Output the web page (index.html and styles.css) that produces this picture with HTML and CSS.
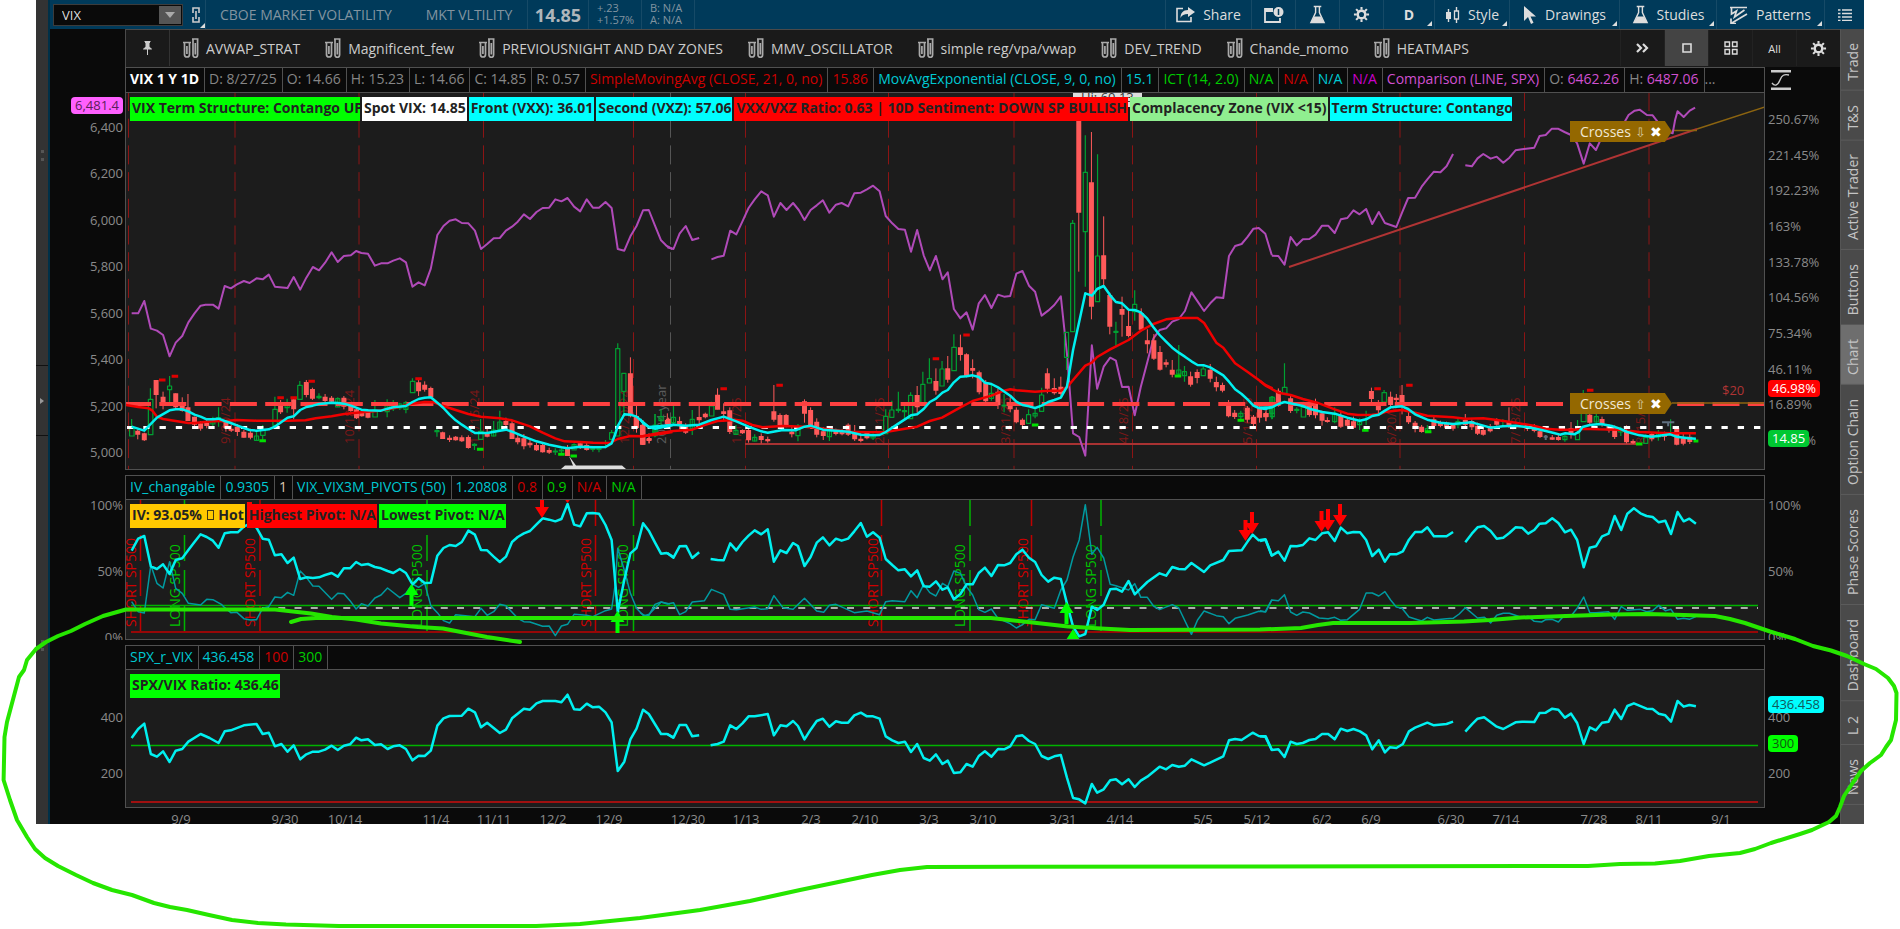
FILE: index.html
```html
<!DOCTYPE html>
<html lang="en">

<head>
    <meta charset="UTF-8">
    <title>VIX - Charts</title>
    <link rel="stylesheet" href="styles.css">
</head>

<body>
    <!-- Shared icons -->
    <svg class="defs" aria-hidden="true">
        <symbol id="i-tubes" viewBox="0 0 17 20">
            <path d="M1 4.500h8M10 1h6.500M2.500 5v11.500a2.500 2.500 0 0 0 5 0V5M11 1.500v15.500a2.300 2.300 0 0 0 4.600 0V1.500M4.900 8v8M13.300 5v11.500" fill="none" stroke="currentColor" stroke-width="1.700" />
        </symbol>
        <symbol id="i-flask" viewBox="0 0 18 20">
            <path d="M5 1.500h8M7 2v6L2 18.500h14L11 8V2" fill="none" stroke="currentColor" stroke-width="1.500" />
            <path d="M5.500 12h7l3.500 6.500H2z" fill="currentColor" />
        </symbol>
        <symbol id="i-gear" viewBox="0 0 18 18">
            <circle cx="9" cy="9" r="4" fill="none" stroke="currentColor" stroke-width="2.600" />
            <path d="M9 1v3M9 14v3M1 9h3M14 9h3M3.300 3.300l2.200 2.200M12.500 12.500l2.200 2.200M14.700 3.300l-2.200 2.200M5.500 12.500l-2.200 2.200" stroke="currentColor" stroke-width="2.200" />
        </symbol>
    </svg>

    <div class="app">
        <div class="rail">
            <span class="rail-grip"></span>
            <button class="rail-toggle" aria-label="Expand panel"></button>
            <span class="rail-grip"></span>
        </div>

        <div class="main">
            <div class="topbar">
                <div class="symbol-cell">
                    <div class="symbol-box">
                        <input type="text" value="VIX" aria-label="Symbol">
                        <button aria-label="Symbol list"></button>
                    </div>
                    <button class="link-btn more" aria-label="Link">
                        <svg width="10" height="18" viewBox="0 0 10 18" fill="none" stroke="currentColor" stroke-width="1.600"><path d="M2 7V2h6v5M2 11v5h6v-5M5 5v8" /></svg>
                    </button>
                </div>
                <div class="quote-name">
                    <span>CBOE MARKET VOLATILITY</span>
                    <span>MKT VLTILITY</span>
                </div>
                <div class="quote-last">14.85</div>
                <div class="quote-small">+.23<br>+1.57%</div>
                <div class="quote-small">B: N/A<br>A: N/A</div>
                <div class="spacer"></div>
                <button class="tool w-share">
                    <svg width="19" height="17" viewBox="0 0 19 17"><path d="M7 2.500H1v13h14V11" fill="none" stroke="currentColor" stroke-width="1.600" /><path d="M12 1l7 5-7 5V8C8 8 6 9 4.500 12 4.500 7 7 4 12 4z" fill="currentColor" /></svg>
                    Share
                </button>
                <button class="tool w-icon" aria-label="Calendar">
                    <svg width="20" height="16" viewBox="0 0 20 16"><path d="M9 2H1v13h15v-4M1 4h8" fill="none" stroke="currentColor" stroke-width="1.800" /><circle cx="14.500" cy="5" r="5" fill="currentColor" /><path d="M14.500 2v6" stroke="#003a5a" stroke-width="1.500" /></svg>
                </button>
                <button class="tool w-icon" aria-label="Lab"><svg width="17" height="19"><use href="#i-flask" /></svg></button>
                <button class="tool w-icon" aria-label="Settings"><svg width="17" height="17"><use href="#i-gear" /></svg></button>
                <button class="tool w-day more"><b>D</b></button>
                <button class="tool w-style more">
                    <svg width="15" height="16" viewBox="0 0 15 16"><path d="M3.500 2v13M11.500 0v4M11.500 12v4" stroke="currentColor" stroke-width="1.400" /><path d="M1 5h5v7H1z" fill="currentColor" /><path d="M9.500 4h4v8h-4z" fill="none" stroke="currentColor" stroke-width="1.300" /></svg>
                    Style
                </button>
                <button class="tool w-drawings more">
                    <svg width="14" height="18" viewBox="0 0 14 18"><path d="M1 0v15l4-4 3 7 2.500-1.200L7.500 10.500H13z" fill="currentColor" /></svg>
                    Drawings
                </button>
                <button class="tool w-studies more"><svg width="17" height="19"><use href="#i-flask" /></svg>Studies</button>
                <button class="tool w-patterns more">
                    <svg width="18" height="18" viewBox="0 0 18 18"><path d="M0 1.500h17M1.500 2v6l5-3-2 6 10-7M1 17.500L17 8M1 12.500v5h5" fill="none" stroke="currentColor" stroke-width="1.700" /></svg>
                    Patterns
                </button>
                <button class="tool w-list" aria-label="Menu">
                    <svg width="14" height="12" viewBox="0 0 14 12"><path d="M0 1h2.500M4 1h10M0 4.500h2.500M4 4.500h10M0 8h2.500M4 8h10M0 11.400h2.500M4 11.400h10" stroke="currentColor" stroke-width="1.500" /></svg>
                </button>
            </div>

            <div class="body">
                <div class="workspace">
                    <div class="sets">
                        <button class="pin" aria-label="Pin">
                            <svg width="9" height="14" viewBox="0 0 9 14"><path d="M2 0h5v1l-1 1v4l2.500 2H.5L3 6V2L2 1zM4.500 8v6" fill="currentColor" stroke="currentColor" /></svg>
                        </button>
                        <div class="set-list">
                            <button><svg width="17" height="20"><use href="#i-tubes" /></svg>AVWAP_STRAT</button>
                            <button><svg width="17" height="20"><use href="#i-tubes" /></svg>Magnificent_few</button>
                            <button><svg width="17" height="20"><use href="#i-tubes" /></svg>PREVIOUSNIGHT AND DAY ZONES</button>
                            <button><svg width="17" height="20"><use href="#i-tubes" /></svg>MMV_OSCILLATOR</button>
                            <button><svg width="17" height="20"><use href="#i-tubes" /></svg>simple reg/vpa/vwap</button>
                            <button><svg width="17" height="20"><use href="#i-tubes" /></svg>DEV_TREND</button>
                            <button><svg width="17" height="20"><use href="#i-tubes" /></svg>Chande_momo</button>
                            <button><svg width="17" height="20"><use href="#i-tubes" /></svg>HEATMAPS</button>
                        </div>
                        <button class="cell" aria-label="More sets">
                            <svg width="13" height="10" viewBox="0 0 13 10"><path d="M1 1l4 4-4 4M7 1l4 4-4 4" fill="none" stroke="currentColor" stroke-width="2.200" /></svg>
                        </button>
                        <button class="cell cell-on" aria-label="Single chart">
                            <svg width="10" height="10" viewBox="0 0 10 10"><path d="M1 1h8v8H1z" fill="none" stroke="currentColor" stroke-width="1.600" /></svg>
                        </button>
                        <button class="cell" aria-label="Grid">
                            <svg width="14" height="14" viewBox="0 0 14 14"><path d="M1 1h4.500v4.500H1zM8.500 1H13v4.500H8.500zM1 8.500h4.500V13H1zM8.500 8.500H13V13H8.500z" fill="none" stroke="currentColor" stroke-width="1.400" /></svg>
                        </button>
                        <button class="cell cell-all">All</button>
                        <button class="cell" aria-label="Chart settings"><svg width="17" height="17"><use href="#i-gear" /></svg></button>
                    </div>

                    <!-- Price -->
                    <div class="row row-price">
                        <div class="axis axis-left">
                            <span class="tag tag-pink">6,481.4</span>
                            <span>6,400</span><span>6,200</span><span>6,000</span><span>5,800</span><span>5,600</span><span>5,400</span><span>5,200</span><span>5,000</span>
                        </div>
                        <div class="pane">
                            <div class="status">
                                <b>VIX 1 Y 1D</b>
                                <span>D: 8/27/25</span>
                                <span>O: 14.66</span>
                                <span>H: 15.23</span>
                                <span>L: 14.66</span>
                                <span>C: 14.85</span>
                                <span>R: 0.57</span>
                                <span class="red">SimpleMovingAvg (CLOSE, 21, 0, no)</span>
                                <span class="red">15.86</span>
                                <span class="cyan">MovAvgExponential (CLOSE, 9, 0, no)</span>
                                <span class="cyan">15.1</span>
                                <span class="green">ICT (14, 2.0)</span>
                                <span class="green">N/A</span>
                                <span class="red">N/A</span>
                                <span class="cyan">N/A</span>
                                <span class="magenta">N/A</span>
                                <span class="orchid">Comparison (LINE, SPX)</span>
                                <span>O: <i>6462.26</i></span>
                                <span>H: <i>6487.06</i></span>
                                <span class="rest">...</span>
                            </div>
                            <div class="plot plot-price">
                                <svg viewBox="126 93 1638 376" preserveAspectRatio="none">
                                    <path class="expiry" d="M128.500 92V469M235 92V469M359 92V469M483.500 92V469M633.500 92V469M745.500 92V469M888.500 92V469M1014 92V469M1132.500 92V469M1256.500 92V469M1400 92V469M1524.500 92V469M1649 92V469" />
                                    <path class="expiry year" d="M670.500 92V469" />
                                    <g class="expiry-text">
                                        <text transform="translate(230 444) rotate(-90)">9/20/24</text>
                                        <text transform="translate(354 444) rotate(-90)">10/18/24</text>
                                        <text transform="translate(479 444) rotate(-90)">11/15/24</text>
                                        <text transform="translate(629 444) rotate(-90)">12/20/24</text>
                                        <text class="year-text" transform="translate(666 444) rotate(-90)">2024 year</text>
                                        <text transform="translate(741 444) rotate(-90)">1/17/25</text>
                                        <text transform="translate(884 444) rotate(-90)">2/21/25</text>
                                        <text transform="translate(1010 444) rotate(-90)">3/21/25</text>
                                        <text transform="translate(1128 444) rotate(-90)">4/18/25</text>
                                        <text transform="translate(1252 444) rotate(-90)">5/16/25</text>
                                        <text transform="translate(1396 444) rotate(-90)">6/20/25</text>
                                        <text transform="translate(1520 444) rotate(-90)">7/18/25</text>
                                        <text transform="translate(1645 444) rotate(-90)">8/15/25</text>
                                    </g>
                                    <path class="support" d="M745 444H1640" />
                                    <path class="trend" d="M1289 267L1697 129" />
                                    <path class="alert-line" d="M1697 129L1765 107M1672 130.500H1697" />

                                    <!-- SPX comparison -->
                                    <g class="seg spx" transform="translate(30 120) scale(.408163 .333333)">
                                        <path d="M249 580 265 580 280 543 296 626 311 632 326 645 342 709 357 668 373 648 388 607 403 580 418 557 430 554 448 554 462 566 477 498 492 505 507 493 524 483 538 489 555 475 570 478 585 464 600 500 631 504 646 471 662 509 677 473 693 441 708 451 723 428 739 397 754 426 769 408 786 406 799 393 812 399 828 401 845 437 860 430 876 430 890 422 906 415 921 427 937 500 952 487 967 496 982 446 998 345 1013 318 1028 302 1043 298 1058 309 1074 310 1090 332 1105 387 1120 372 1136 355 1151 354 1166 332 1181 320 1195 305 1210 283 1225 297 1241 276 1256 264 1272 263 1287 238 1302 244 1317 234 1333 260 1348 274 1364 238 1379 263 1394 263 1410 246 1425 264 1440 387 1456 392 1471 349 1486 318 1502 271 1516 270 1531 316 1546 361 1560 378 1574 387" />
                                    </g>
                                    <g class="seg spx" transform="translate(640 120) scale(.408163 .333333)">
                                        <path d="M67 382 82 387 97 341 112 318 128 360 145 354M175 418 190 411 205 407 221 332 236 343 251 304 266 264 281 238 297 214 313 226 328 290 344 249 359 270 375 249 389 270 403 300 418 270 433 256 448 241 464 278 480 254 494 249 510 259 525 220 541 218 556 208 571 197 587 214 602 288 618 310 633 327 649 329 664 395 679 330 695 406 710 451 725 408 741 478 754 457 769 567 785 595 800 577 815 629 830 550 845 525 861 564 877 524 892 530 907 528 922 461 937 453 953 497 968 515 984 587 1000 572 1015 555 1031 529 1046 700 1061 940 1076 951 1091 1007 1107 676 1120 806 1136 740 1152 713 1166 722 1181 801 1197 800 1212 886 1227 800 1243 726 1258 655 1273 630 1289 625 1304 605 1320 597 1335 573 1351 517 1366 544 1382 573 1397 550 1412 532 1429 534 1443 408 1458 378 1474 372 1489 350 1503 326 1516 324 1532 341 1548 406" />
                                    </g>
                                    <g class="seg spx" transform="translate(1260 120) scale(.408163 .333333)">
                                        <path d="M29 407 45 408 60 434 75 351 90 376 105 358 121 357 136 344 152 317 167 317 183 339 198 298 214 294 229 271 244 283 260 267 275 312 291 276 306 309 334 321 348 278 363 234 380 233 396 200 410 178 426 155 442 157 457 139 473 102M503 136 519 139 533 115 547 102 565 116 580 110 596 128 611 113 626 91 642 88 672 83 685 48 700 45 715 26 730 26 746 36 762 45 777 70 793 131 808 70 823 90 838 50 866 44 882 30 895 2 903 -15 918 -28 930 -31 948 -15 962 -14 972 2 990 30 1011 40 1017 0 1023 -26 1038 -9 1053 -28 1066 -37" />
                                    </g>

                                    <!-- Candles -->
                                    <g class="seg" transform="translate(30 120) scale(.408163 .333333)">
                                        <path class="wick-dn" d="M264 928V958M280 938V963M309 780V865M326 815V868M357 820V870M373 832V875M387 822V903M403 890V925M418 903V932M433 900V925M480 903V935M493 913V936M508 912V948M524 930V953M540 926V958M614 840V882M646 832V898M677 780V832M692 803V840M723 822V848M739 828V850M769 828V868M786 850V875M800 862V897M813 868V890M828 868V895M952 780V828M967 784V815M982 800V835M1011 935V957M1028 946V966M1043 948V962M1058 946V966M1074 946V986M1120 925V952M1166 893V920M1181 902V957M1195 943V973M1210 942V988M1225 955V983M1241 968V993M1256 966V998M1272 983V1002M1317 975V1008M1348 966V987M1364 968V992M1471 712V892M1486 855V938M1502 900V975M1517 945V970M1564 893V920" />
                                        <path class="body-dn" d="M264 932V944M280 940V961M309 780V825M326 830V858M357 820V862M373 855V873M387 862V903M403 890V914M418 910V926M433 908V918M480 906V925M493 926V932M508 920V936M524 935V953M540 938V953M614 850V877M646 838V868M677 786V825M692 807V836M723 830V843M739 833V845M769 833V860M786 858V873M800 868V895M813 877V889M828 876V893M952 787V814M967 794V809M982 804V832M1011 937V957M1028 953V960M1043 950V961M1058 952V964M1074 951V984M1120 938V950M1166 903V915M1181 910V957M1195 953V967M1210 955V979M1225 968V976M1241 975V991M1256 975V997M1272 990V998M1317 985V1008M1348 970V984M1364 975V990M1471 760V889M1486 888V924M1502 914V974M1517 954V961M1564 896V916" />
                                        <path class="candle-up" d="M249 897V925M244 925h11v23h-11zM295 805V838M290 838h11v106h-11zM342 768V798M337 798h10v11h-10zM342 809V855M448 890V920M443 905h10v7h-10zM462 862V920M457 893h10v10h-10zM555 935V962M550 948h10v13h-10zM570 915V928M565 928h11v18h-11zM570 946V962M600 830V868M595 868h11v48h-11zM630 836V878M625 848h10v15h-10zM661 783V796M656 796h11v42h-11zM708 820V838M703 829h10v4h-10zM754 832V862M749 836h10v25h-10zM845 840V870M840 870h11v21h-11zM875 838V892M870 850h10v25h-10zM890 840V873M885 850h10v16h-10zM906 848V870M901 852h10v12h-10zM921 843V880M916 848h10v20h-10zM937 775V784M932 784h11v34h-11zM997 928V950M992 932h10v3h-10zM1089 970V990M1084 973h10v3h-10zM1104 897V934M1099 934h11v24h-11zM1136 903V950M1131 930h10v18h-10zM1151 872V930M1146 906h10v22h-10zM1287 985V1005M1282 993h10v3h-10zM1302 985V1000M1297 990h10v3h-10zM1333 970V990M1328 974h10v16h-10zM1379 978V995M1374 984h10v4h-10zM1394 980V997M1389 984h10v4h-10zM1410 960V985M1425 930V938M1420 938h11v20h-11zM1440 670V686M1435 686h10v262h-10zM1455 814V882M1450 760h10v54h-10zM1531 882V952M1526 925h10v12h-10zM1546 868V925M1541 890h10v12h-10z" />
                                        <path class="tick-red" d="M316 780h16M347 769h16M606 833h16M638 833h16M682 784h16M944 776h16" />
                                        <path class="tick-green" d="M562 962h16M1095 988h16M1294 1003h16M1324 1008h16" />
                                    </g>
                                    <g class="seg" transform="translate(640 120) scale(.408163 .333333)">
                                        <path class="wick-dn" d="M6 910V975M22 940V970M67 880V925M97 890V928M112 910V942M145 855V912M160 878V895M190 805V868M205 850V905M220 862V942M251 928V942M266 922V968M297 940V970M313 950V968M328 795V905M343 880V922M358 882V922M372 915V952M403 838V908M418 862V922M433 895V952M449 922V960M480 926V946M495 928V946M510 910V948M526 915V963M541 940V967M556 935V958M679 798V878M725 745V824M754 708V788M785 644V722M800 700V772M815 718V775M831 752V823M847 780V852M877 805V867M907 825V877M922 862V910M937 895V918M998 745V820M1015 775V824M1031 770V827M1075 0V455M1106 36V598M1136 289V502M1151 518V643M1181 530V650M1197 570V652M1228 565V634M1243 628V700M1259 642V720M1274 678V752M1289 718V742M1304 720V772M1349 755V800M1365 748V790M1397 732V787M1412 770V814M1427 788V817M1442 840V892M1457 870V897M1488 858V908M1503 885V918M1518 850V908M1534 868V904M1564 808V855" />
                                        <path class="body-dn" d="M6 915V974M22 957V963M67 900V912M97 903V912M112 918V938M145 891V901M160 881V892M190 824V869M205 874V882M220 871V936M251 930V940M266 930V961M297 948V960M313 957V964M328 874V899M343 885V916M358 885V918M372 935V943M403 844V881M418 870V915M433 905V944M449 934V948M480 930V942M495 933V943M510 914V944M526 936V958M541 956V963M556 938V955M679 825V862M725 783V812M754 745V779M785 682V705M800 703V768M815 744V752M831 757V817M847 789V844M877 815V856M907 856V868M922 869V907M937 899V915M998 760V806M1015 804V820M1031 800V822M1075 0V278M1106 187V560M1136 406V478M1151 525V620M1181 567V584M1197 618V648M1228 579V629M1243 661V673M1259 661V716M1274 696V749M1289 727V734M1304 749V764M1349 769V794M1365 756V774M1397 749V776M1412 786V802M1427 795V812M1442 855V889M1457 878V891M1488 863V899M1503 890V912M1518 860V893M1534 879V891M1564 812V850" />
                                        <path class="candle-up" d="M37 882V950M32 915h10v32h-10zM82 855V912M77 892h10v16h-10zM128 870V945M123 898h10v28h-10zM175 845V858M170 858h11v30h-11zM235 915V945M230 931h10v12h-10zM281 943V965M276 952h10v11h-10zM387 912V928M382 928h10v19h-10zM387 947V964M464 925V963M459 932h10v18h-10zM571 935V960M566 944h10v10h-10zM602 868V889M597 889h10v52h-10zM617 842V870M612 870h10v22h-10zM633 815V878M628 868h10v3h-10zM648 853V898M643 872h10v3h-10zM663 817V826M658 826h10v70h-10zM693 755V793M688 793h10v62h-10zM709 715V776M704 776h10v13h-10zM740 723V747M735 747h10v51h-10zM769 643V682M764 682h11v70h-11zM861 795V842M856 820h10v15h-10zM892 822V877M887 855h10v3h-10zM952 868V884M947 884h10v26h-10zM968 868V895M963 880h10v8h-10zM984 803V825M979 825h10v49h-10zM1045 713V750M1040 637h10v75h-10zM1060 300V310M1055 310h10v325h-10zM1091 46V157M1086 157h10v178h-10zM1091 335V500M1121 103V408M1116 408h10v137h-10zM1166 605V677M1161 634h10v3h-10zM1212 511V553M1207 553h10v22h-10zM1212 575V602M1320 675V770M1315 750h10v12h-10zM1334 738V785M1329 755h10v12h-10zM1380 732V747M1375 747h10v20h-10zM1472 872V905M1467 880h10v10h-10zM1549 828V897M1544 832h10v58h-10z" />
                                        <path class="tick-red" d="M197 806h16M334 796h16M717 716h16M792 645h16" />
                                        <path class="tick-green" d="M960 915h16M1310 768h16M1464 901h16" />
                                    </g>
                                    <g class="seg" transform="translate(1260 120) scale(.408163 .333333)">
                                        <path class="wick-dn" d="M14 875V903M45 805V860M75 828V879M121 840V890M136 836V895M152 872V917M165 892V908M198 875V924M214 893V920M229 890V927M273 803V857M290 840V887M320 815V862M334 822V852M348 795V883M364 872V912M380 903V937M396 915V938M426 888V922M442 902V922M457 905V927M473 910V932M503 882V920M519 898V930M533 908V945M547 922V947M564 912V937M580 895V917M610 862V924M655 912V933M672 912V937M686 928V954M716 945V960M731 943V962M762 906V956M808 880V912M838 890V920M855 912V938M869 916V957M898 916V970M914 958V972M960 936V964M991 935V962M1021 918V976M1037 938V976M1053 938V972" />
                                        <path class="body-dn" d="M14 880V892M45 835V850M75 835V873M121 852V885M136 850V886M152 880V902M165 900V906M198 885V920M214 899V917M229 904V923M273 813V837M290 849V871M320 830V855M334 833V840M348 825V856M364 888V907M380 908V918M396 920V936M426 898V918M442 906V918M457 908V923M473 914V926M503 900V915M519 903V922M533 917V941M547 930V944M564 918V934M580 900V914M610 905V915M655 915V927M672 918V933M686 934V951M716 952V959M731 951V960M762 925V942M808 884V908M838 897V915M855 917V931M869 924V951M898 931V967M914 963V970M960 942V958M991 940V950M1021 924V974M1037 955V971M1053 950V966" />
                                        <path class="candle-up" d="M29 828V898M24 832h11v48h-11zM60 730V802M55 802h11v18h-11zM90 862V880M85 868h10v3h-10zM106 845V862M101 862h11v29h-11zM183 862V910M178 880h10v25h-10zM244 895V930M239 906h10v8h-10zM260 872V915M304 810V818M299 818h11v28h-11zM410 915V938M405 926h12v9h-12zM485 893V925M480 905h10v10h-10zM595 898V920M747 945V965M742 949h10v10h-10zM778 900V940M773 940h10v19h-10zM792 810V875M787 875h12v30h-12zM824 870V912M819 890h10v16h-10zM884 920V948M879 927h10v9h-10zM945 943V953M940 953h10v17h-10zM976 930V962M971 941h10v10h-10zM1006 898V937" />
                                        <path class="tick-red" d="M280 806h16M358 796h16M801 811h16" />
                                        <path class="tick-green" d="M250 931h16M404 935h16M921 972h16M1062 963h12" />
                                        <path class="tick-grey" d="M695 950h10M700 945v15M985 907h30M1000 907v12" />
                                    </g>

                                    <path class="level-white" d="M127 427.500H1764" />
                                    <path class="level-red" d="M126 404H1764" />

                                    <!-- Moving averages -->
                                    <g class="seg sma" transform="translate(30 120) scale(.408163 .333333)">
                                        <path d="M234 855 265 861 291 865 300 872 311 890 326 897 357 903 388 909 403 909 448 904 477 903 507 900 555 902 631 902 675 901 700 895 739 889 770 882 812 877 850 873 876 868 906 860 937 851 967 846 990 847 1013 858 1043 870 1074 882 1105 890 1151 895 1181 901 1225 919 1256 938 1287 955 1310 964 1348 966 1380 968 1420 969 1440 957 1471 948 1502 949 1531 944 1574 936" />
                                    </g>
                                    <g class="seg sma" transform="translate(640 120) scale(.408163 .333333)">
                                        <path d="M0 950 37 941 82 933 128 929 158 915 190 903 236 900 251 902 275 915 300 922 350 918 403 920 440 925 480 931 510 935 555 937 602 936 649 926 679 920 710 903 740 893 785 862 815 843 861 827 892 812 907 808 922 811 968 815 1000 812 1031 812 1046 802 1061 780 1091 737 1107 728 1120 711 1152 688 1197 660 1227 632 1258 612 1289 598 1320 594 1366 594 1382 609 1412 668 1429 683 1458 730 1489 756 1516 780 1532 795 1550 805" />
                                    </g>
                                    <g class="seg sma" transform="translate(1260 120) scale(.408163 .333333)">
                                        <path d="M0 783 15 798 45 818 75 825 105 837 140 848 183 868 214 881 240 885 275 884 291 883 306 876 348 870 380 878 410 887 473 892 503 896 547 895 580 900 626 908 670 917 700 926 735 929 770 929 790 926 830 928 880 929 930 936 1005 940 1068 940" />
                                    </g>
                                    <g class="seg ema" transform="translate(30 120) scale(.408163 .333333)">
                                        <path d="M249 920 280 932 311 893 342 871 357 868 373 868 388 874 403 884 418 890 433 898 448 898 462 896 477 903 492 909 507 916 524 924 538 930 555 932 585 928 600 920 616 906 631 893 646 889 662 870 677 861 693 857 708 852 739 848 754 849 769 851 786 857 812 869 828 871 860 872 876 866 890 862 921 858 937 846 952 837 967 833 982 832 998 848 1013 864 1028 884 1043 901 1058 914 1074 927 1090 939 1120 939 1151 932 1166 929 1181 935 1210 950 1241 964 1272 974 1302 982 1317 985 1348 980 1380 982 1410 981 1425 970 1433 945 1440 918 1456 883 1471 884 1486 890 1502 907 1516 921 1531 926 1574 916" />
                                    </g>
                                    <g class="seg ema" transform="translate(640 120) scale(.408163 .333333)">
                                        <path d="M0 897 8 910 22 921 52 918 82 914 112 917 145 914 175 900 205 890 236 904 266 920 297 934 313 938 350 930 381 931 403 920 418 917 448 929 480 932 510 935 541 944 571 946 587 945 602 936 633 911 664 886 679 883 695 867 710 846 725 836 741 818 754 810 769 787 785 770 800 769 815 766 830 771 845 788 861 792 877 802 907 827 922 845 937 855 953 859 968 864 984 857 1000 846 1015 840 1031 833 1046 800 1061 690 1076 605 1091 520 1107 527 1120 507 1136 498 1152 526 1166 546 1181 550 1197 569 1212 570 1227 577 1243 596 1258 622 1273 645 1289 665 1304 683 1320 698 1335 710 1351 724 1366 735 1382 736 1397 742 1429 766 1443 785 1458 808 1474 822 1489 839 1503 857 1516 864 1532 867 1548 861" />
                                    </g>
                                    <g class="seg ema" transform="translate(1260 120) scale(.408163 .333333)">
                                        <path d="M0 863 29 862 45 852 60 846 105 858 121 866 152 876 183 881 214 893 244 902 260 898 275 888 291 884 306 872 320 862 348 859 363 867 380 883 410 899 442 908 473 912 519 907 547 917 565 923 595 919 626 917 657 922 690 930 720 939 735 944 748 940 770 943 782 935 790 921 808 915 835 912 862 918 880 925 900 936 930 946 960 950 1005 943 1020 950 1050 955 1068 956" />
                                    </g>

                                    <path class="bubble" d="M569 456l7 9.500h46l4 3.500h-65l4-3.500h8z" />
                                    <path class="bubble" d="M1073 93h69v14h-69z" />
                                    <text class="bubble-text" x="1081" y="102">Hi: 60.13</text>
                                    <path class="alert-line" d="M1672 403H1765" />
                                    <text class="price-text" x="1722" y="395">$20</text>
                                </svg>
                                <div class="labels">
                                    <span class="label label-wide bg-green">VIX Term Structure: Contango UP</span>
                                    <span class="label bg-white">Spot VIX: 14.85</span>
                                    <span class="label bg-cyan">Front (VXX): 36.01</span>
                                    <span class="label bg-cyan">Second (VXZ): 57.06</span>
                                    <span class="label bg-red">VXX/VXZ Ratio: 0.63 | 10D Sentiment: DOWN SP BULLISH</span>
                                    <span class="label bg-lime">Complacency Zone (VIX &lt;15)</span>
                                    <span class="label label-term bg-cyan">Term Structure: Contango</span>
                                </div>
                                <div class="alert alert-top">Crosses <em>⇩</em><button aria-label="Remove alert">✖</button></div>
                                <div class="alert alert-low">Crosses <em>⇧</em><button aria-label="Remove alert">✖</button></div>
                            </div>
                        </div>
                        <div class="axis axis-right">
                            <svg class="scale-icon" width="20" height="20" viewBox="0 0 20 20"><path d="M0 1.200h20M0 18.800h20" stroke="#ccc" stroke-width="2.400" /><path d="M1 13c3 4 6 2 8-3s4-6 9-5" fill="none" stroke="#ccc" stroke-width="1.400" /></svg>
                            <span>250.67%</span><span>221.45%</span><span>192.23%</span><span>163%</span><span>133.78%</span><span>104.56%</span><span>75.34%</span><span>46.11%</span><span>16.89%</span><span>-12.34%</span>
                            <span class="tag tag-red">46.98%</span>
                            <span class="tag tag-green">14.85</span>
                        </div>
                    </div>

                    <!-- IV rank and pivots -->
                    <div class="row row-iv">
                        <div class="axis axis-left"><span>100%</span><span>50%</span><span>0%</span></div>
                        <div class="pane">
                            <div class="status">
                                <span class="cyan">IV_changable</span>
                                <span class="cyan">0.9305</span>
                                <span class="pale">1</span>
                                <span class="cyan">VIX_VIX3M_PIVOTS (50)</span>
                                <span class="cyan">1.20808</span>
                                <span class="red">0.8</span>
                                <span class="green">0.9</span>
                                <span class="red">N/A</span>
                                <span class="green">N/A</span>
                            </div>
                            <div class="plot plot-iv">
                                <svg viewBox="126 500 1638 139" preserveAspectRatio="none">
                                    <path class="pivot-red" d="M140.500 500V632M260 500V632M595.500 500V632M881.500 500V632M1031.500 500V632" />
                                    <path class="pivot-green" d="M184.500 500V632M427 500V632M633.500 500V632M970 500V632M1101 500V632" />
                                    <g class="pivot-text-red">
                                        <text transform="translate(136 627) rotate(-90)">SHORT SP500</text>
                                        <text transform="translate(255 627) rotate(-90)">SHORT SP500</text>
                                        <text transform="translate(591 627) rotate(-90)">SHORT SP500</text>
                                        <text transform="translate(878 627) rotate(-90)">SHORT SP500</text>
                                        <text transform="translate(1028 627) rotate(-90)">SHORT SP500</text>
                                    </g>
                                    <g class="pivot-text-green">
                                        <text transform="translate(180 627) rotate(-90)">LONG SP500</text>
                                        <text transform="translate(422 627) rotate(-90)">LONG SP500</text>
                                        <text transform="translate(628 627) rotate(-90)">LONG SP500</text>
                                        <text transform="translate(965 627) rotate(-90)">LONG SP500</text>
                                        <text transform="translate(1096 627) rotate(-90)">LONG SP500</text>
                                    </g>
                                    <path class="line-green" d="M131 605.500H1758" />
                                    <path class="dash-white" d="M262 608H1758" />
                                    <path class="line-red" d="M131 632H1758" />
                                    <g class="seg ratio" transform="translate(30 460) scale(.408163 .333333)">
                                        <path d="M249 425 265 455 280 459 296 315 311 370 326 384 342 305 357 385 373 400 388 430 418 435 433 418 448 419 470 434 477 443 492 458 507 457 524 476 540 480 555 479 570 445 585 440 600 411 616 413 631 397 646 406 662 333 677 352 693 378 708 379 739 418 754 400 769 401 784 422 799 447 812 431 828 438 845 414 860 405 876 384 906 413 921 400 937 372 952 382 967 370 982 437 998 458 1013 482 1028 489 1043 464 1090 470 1105 445 1120 466 1136 455 1151 433 1166 437 1195 475 1210 485 1225 486 1256 499 1272 498 1287 527 1302 498 1317 493 1333 463 1364 466 1379 470 1410 452 1425 447 1433 380 1440 265 1456 330 1471 400 1486 445 1502 466 1516 467 1531 433 1546 426 1568 432" />
                                    </g>
                                    <g class="seg ratio" transform="translate(640 460) scale(.408163 .333333)">
                                        <path d="M0 458 12 467 22 463 52 426 67 432 82 428 97 464 112 455 128 426 158 422 175 388 205 403 221 448 236 449 281 441 297 448 313 446 328 407 350 443 375 448 403 415 433 453 450 457 464 436 480 433 525 458 556 453 587 464 602 425 618 422 649 425 664 392 679 413 695 373 710 398 725 408 741 370 754 380 769 333 785 340 800 380 815 405 830 449 845 457 861 447 877 475 907 491 922 504 937 494 953 478 968 479 984 434 1015 445 1031 390 1046 360 1061 291 1076 240 1091 134 1107 283 1120 262 1136 294 1152 373 1166 377 1197 390 1212 371 1227 412 1243 412 1258 438 1273 449 1304 434 1320 444 1351 523 1366 480 1382 453 1412 467 1429 470 1443 491 1458 475 1489 465 1516 454 1532 455 1548 419" />
                                    </g>
                                    <g class="seg ratio" transform="translate(1260 460) scale(.408163 .333333)">
                                        <path d="M0 452 14 456 29 420 45 422 60 404 75 456 90 466 105 456 121 459 145 474 167 476 183 472 198 481 214 479 244 448 260 399 275 399 291 408 306 395 320 420 334 441 348 445 365 471 396 483 410 472 426 480 457 476 473 475 488 462 503 443 533 474 550 472 565 489 580 466 596 460 611 460 640 472 657 469 672 484 690 486 700 479 716 478 731 486 747 464 762 468 777 445 793 411 808 458 823 458 854 455 869 478 885 440 900 451 932 448 947 455 962 452 977 436 993 452 1007 448 1023 478 1038 475 1052 478 1068 470" />
                                    </g>
                                    <g class="seg rank" transform="translate(30 460) scale(.408163 .333333)">
                                        <path d="M249 272 265 236 280 228 296 319 311 327 326 313 342 342 357 300 373 295 388 270 403 246 418 223 433 231 448 242 462 263 477 220 492 217 509 217 524 200 540 190 555 203 570 236 585 239 600 286 616 283 631 309 646 293 662 357 677 352 693 354 708 352 723 345 739 339 754 350 769 325 784 325 799 306 812 315 828 312 845 321 860 325 876 333 890 339 906 327 921 339 937 373 952 355 967 369 982 368 998 287 1013 264 1028 255 1043 258 1058 246 1074 212 1090 224 1105 270 1120 271 1136 290 1151 306 1166 290 1181 246 1195 231 1210 220 1225 213 1241 193 1256 175 1272 179 1287 184 1302 177 1317 132 1333 194 1348 199 1364 160 1379 159 1394 161 1410 195 1425 240 1440 455 1456 360 1471 280 1486 264 1502 190 1516 212 1531 247 1546 281 1560 279 1574 289" />
                                    </g>
                                    <g class="seg rank" transform="translate(640 460) scale(.408163 .333333)">
                                        <path d="M67 279 82 293 97 259 113 258 128 294 145 277M173 297 190 300 205 301 221 250 236 271 251 246 266 227 281 211 297 223 313 208 328 305 344 271 359 279 375 249 387 258 403 318 418 291 433 248 448 232 464 256 480 236 494 242 510 236 525 214 541 189 556 230 571 217 587 233 602 297 618 315 633 331 649 328 664 349 679 331 695 379 710 380 725 364 741 389 754 382 769 418 785 402 800 373 815 373 830 339 845 323 861 348 877 315 892 316 907 309 922 283 937 269 953 293 968 306 984 345 1000 365 1015 353 1031 357 1046 430 1061 500 1076 529 1091 522 1107 440 1120 450 1136 434 1152 388 1166 386 1181 395 1197 363 1212 403 1227 385 1243 366 1273 340 1289 347 1304 321 1320 327 1335 328 1351 309 1382 336 1397 316 1429 300 1443 273 1474 271 1489 244 1501 224 1516 241 1532 238 1548 287" />
                                    </g>
                                    <g class="seg rank" transform="translate(1260 460) scale(.408163 .333333)">
                                        <path d="M0 243 14 239 29 287 45 275 60 302 75 258 90 259 105 255 121 235 136 240 152 220 167 217 183 243 198 203 214 220 229 216 245 217 260 240 275 288 291 269 306 305 318 283 334 283 350 274 365 239 380 216 396 216 410 202 426 229 457 229 473 216M503 247 519 221 533 202 549 198 565 213 580 236 596 233 611 219 626 202 642 203 657 221 672 210 685 191 700 190 716 175 731 189 747 217 762 209 777 240 793 322 808 263 823 259 838 229 854 221 869 168 885 210 900 161 916 145 932 160 947 168 962 171 977 187 993 182 1007 222 1023 156 1038 184 1052 176 1068 191" />
                                    </g>
                                    <g class="arrow-red">
                                        <path d="M542 518l-7-11h5v-10h4v10h5zM567.500 503l-3-4h6zM1245.500 541l-7-11h5v-10h4v10h5zM1252 534l-7-11h5v-11h4v11h5zM1321.500 532l-7-11h5v-10h4v10h5zM1328 531l-7-11h5v-11h4v11h5zM1340 526l-7-11h5v-11h4v11h5z" />
                                        <path d="M247 502h5v6h-5z" />
                                    </g>
                                    <path class="arrow-green" d="M411.500 584l7 11h-5v11h-4v-11h-5zM617.500 611l7 11h-5v11h-4v-11h-5zM1066.500 602l7 11h-5v11h-4v-11h-5zM1073 629l7 11h-14z" />
                                </svg>
                                <div class="labels">
                                    <span class="label bg-amber">IV: 93.05% <i class="missing"></i> Hot</span>
                                    <span class="label bg-red">Highest Pivot: N/A</span>
                                    <span class="label bg-green">Lowest Pivot: N/A</span>
                                </div>
                            </div>
                        </div>
                        <div class="axis axis-right"><span>100%</span><span>50%</span><span>0%</span></div>
                    </div>

                    <!-- SPX / VIX ratio -->
                    <div class="row row-ratio">
                        <div class="axis axis-left"><span>400</span><span>200</span></div>
                        <div class="pane">
                            <div class="status">
                                <span class="cyan">SPX_r_VIX</span>
                                <span class="cyan">436.458</span>
                                <span class="red">100</span>
                                <span class="green">300</span>
                            </div>
                            <div class="plot plot-ratio">
                                <svg viewBox="126 670 1638 137" preserveAspectRatio="none">
                                    <path class="line-green" d="M131 745.500H1758" />
                                    <path class="line-red line-thick" d="M131 802H1758" />
                                    <g class="seg rank" transform="translate(30 460) scale(.408163 .333333)">
                                        <path d="M249 834 265 807 280 791 296 882 311 890 326 874 342 906 357 872 373 867 388 845 418 822 440 834 462 849 477 814 492 811 524 796 555 792 570 822 585 818 600 859 616 852 631 875 646 856 662 898 677 883 693 875 708 875 723 869 739 857 754 870 769 857 784 853 799 833 812 841 828 838 845 855 860 853 876 867 890 859 906 856 921 867 937 901 952 887 967 888 982 872 998 797 1013 775 1028 768 1058 767 1074 746 1090 757 1105 802 1120 788 1136 804 1151 819 1166 809 1181 775 1210 746 1225 749 1241 730 1256 723 1287 723 1302 727 1317 704 1333 748 1348 749 1364 731 1379 742 1394 740 1410 757 1425 787 1440 933 1456 905 1471 838 1486 806 1502 749 1516 762 1531 792 1546 822 1561 822 1576 833" />
                                    </g>
                                    <g class="seg rank" transform="translate(640 460) scale(.408163 .333333)">
                                        <path d="M67 822 82 833 97 795 113 795 128 829 145 826M173 856 190 852 205 845 221 796 236 807 251 790 266 769 281 769 313 762 328 826 344 796 359 799 375 783 387 798 403 838 418 809 433 783 448 776 464 800 480 784 494 788 510 788 525 766 541 758 556 769 571 769 587 776 602 829 618 841 633 849 649 845 664 876 679 852 695 894 710 902 725 883 741 912 754 902 769 939 785 937 800 912 815 920 830 888 845 874 861 890 877 867 892 868 907 859 922 829 937 826 953 843 968 852 984 888 1000 897 1015 889 1031 885 1046 953 1061 1014 1076 1018 1091 1030 1107 972 1120 998 1136 988 1152 961 1166 958 1181 973 1197 958 1212 981 1227 962 1243 950 1273 920 1289 928 1304 915 1320 920 1335 917 1351 898 1382 916 1397 908 1429 889 1443 841 1458 837 1474 840 1501 818 1516 828 1532 830 1548 870" />
                                    </g>
                                    <g class="seg rank" transform="translate(1260 460) scale(.408163 .333333)">
                                        <path d="M0 829 14 829 29 870 45 868 60 891 75 845 90 852 105 849 121 840 136 837 152 822 167 822 183 838 198 806 214 813 229 807 245 814 260 826 275 868 291 841 306 877 318 862 334 864 350 852 365 814 380 803 410 788 426 796 457 792 473 785M503 815 519 793 533 776 549 772 580 800 596 807 626 787 642 785 672 786 685 759 700 758 716 746 731 749 747 773 762 761 777 789 793 852 808 802 823 811 838 788 854 785 869 749 885 777 900 738 916 730 947 746 962 747 977 761 993 766 1007 785 1023 723 1038 740 1052 735 1068 739" />
                                    </g>
                                </svg>
                                <div class="labels">
                                    <span class="label bg-green">SPX/VIX Ratio: 436.46</span>
                                </div>
                            </div>
                        </div>
                        <div class="axis axis-right">
                            <span>400</span><span>200</span>
                            <span class="tag tag-cyan">436.458</span>
                            <span class="tag tag-lime">300</span>
                        </div>
                    </div>

                    <div class="dates">
                        <svg viewBox="125 808 1640 16" preserveAspectRatio="none">
                            <text x="181" y="824">9/9</text>
                            <text x="285" y="824">9/30</text>
                            <text x="345" y="824">10/14</text>
                            <text x="436" y="824">11/4</text>
                            <text x="494" y="824">11/11</text>
                            <text x="553" y="824">12/2</text>
                            <text x="609" y="824">12/9</text>
                            <text x="688" y="824">12/30</text>
                            <text x="746" y="824">1/13</text>
                            <text x="811" y="824">2/3</text>
                            <text x="865" y="824">2/10</text>
                            <text x="929" y="824">3/3</text>
                            <text x="983" y="824">3/10</text>
                            <text x="1063" y="824">3/31</text>
                            <text x="1120" y="824">4/14</text>
                            <text x="1203" y="824">5/5</text>
                            <text x="1257" y="824">5/12</text>
                            <text x="1322" y="824">6/2</text>
                            <text x="1371" y="824">6/9</text>
                            <text x="1451" y="824">6/30</text>
                            <text x="1506" y="824">7/14</text>
                            <text x="1594" y="824">7/28</text>
                            <text x="1649" y="824">8/11</text>
                            <text x="1721" y="824">9/1</text>
                        </svg>
                    </div>
                </div>

                <div class="tabs">
                    <button>Trade</button>
                    <button>T&amp;S</button>
                    <button>Active Trader</button>
                    <button>Buttons</button>
                    <button class="tab-on">Chart</button>
                    <button>Option Chain</button>
                    <button>Phase Scores</button>
                    <button>Dashboard</button>
                    <button>L 2</button>
                    <button>News</button>
                </div>
            </div>
        </div>
    </div>

    <!-- Freehand marker over the lower study -->
    <svg class="marker" viewBox="0 0 1900 929" preserveAspectRatio="none" aria-hidden="true">
        <path d="M520 642 487 637 461 632 443 628.500 418 627 381 623.500 356 619.500 332 617 311 613.500 275 609.500 126 609.500 103 616 85 624 71 631 58 636 46 642 36 649 27 660 24 670 19 677 15 692 11 707 7 722 4.500 737 3.600 780 10 800 17 820 27 837 35 849 45 858 58 866 76 875 93 883 112 890 132 895 154 903 170 907 187 910 209 915 232 920 258 923 286 924.500 339 926 536 926 580 924 640 918 700 910 750 901 800 890 872 875 900 870 927 867 1588 866 1620 864 1655 863.500 1680 861 1709 856 1740 853 1755 849 1771 843 1800 834 1812 830 1829 822 1836 816 1840 807 1844 796 1852 784 1861 771 1870 763 1881 755 1886 747 1891 740 1896 720 1896.500 693 1894 686 1888 678 1876 669 1864 664 1847 656 1831 650.500 1813 646 1795 639 1770 631.500 1745 623 1730 619 1715 616 1684 615 1648 614 1611 614.500 1566 616 1521 617.500 1490 620 1464 621.500 1411 623 1333 623 1318 625 1301 628 1260 629.500 1130 630 1101 628.500 1068 626.500 1028 622 991 618 640 618 316 618 301 619 291 622" />
    </svg>
</body>

</html>
```
FILE: styles.css
```css
* {
    box-sizing: border-box;
}

body {
    margin: 0;
    background-color: #fff;
    font-family: "Open Sans", "Noto Sans", sans-serif;
    font-size: 14px;
    color: #ccc;
}

button {
    font: inherit;
    color: inherit;
    background: none;
    border: 0;
    padding: 0;
}

svg {
    display: block;
    flex: none;
}

.defs {
    position: absolute;
    width: 0;
    height: 0;
}

.app {
    display: flex;
    margin: 0 36px;
    background-color: #0a0a0a;
}

.rail {
    width: 12px;
    background-color: #333;
    display: flex;
    flex-direction: column;
    align-items: center;
    padding-top: 150px;
}

.rail-grip {
    width: 3px;
    height: 11px;
    border-left: 3px dotted #555;
}

.rail-toggle {
    width: 12px;
    height: 71px;
    margin: 204px 0;
    border-top: 1px solid #111;
    border-bottom: 1px solid #111;
}

.rail-toggle::before {
    content: "";
    display: block;
    margin-left: 4px;
    width: 0;
    border: 3px solid transparent;
    border-left: 4px solid #999;
}

.main {
    flex: 1;
    min-width: 0;
    border-left: 2px solid #003047;
}

/* Top bar */
.topbar {
    height: 29px;
    display: flex;
    align-items: stretch;
    background-color: #003a5a;
}

.topbar > div,
.tool {
    border-right: 1px solid #164a67;
}

.topbar .spacer {
    flex: 1;
}

.symbol-cell {
    width: 156px;
    padding: 3px 0 3px 3px;
    display: flex;
    align-items: center;
    gap: 8px;
}

.symbol-box {
    width: 130px;
    height: 22px;
    display: flex;
    background-color: #0a0a0a;
    border: 1px solid #3c3c3c;
}

.symbol-box input {
    flex: 1;
    min-width: 0;
    font: inherit;
    font-size: 13px;
    color: #ddd;
    background: none;
    border: 0;
    padding: 0 8px;
}

.symbol-box button {
    width: 22px;
    margin: 1px;
    background-color: #555;
}

.symbol-box button::before {
    content: "";
    display: block;
    width: 0;
    margin: 0 auto;
    border: 5px solid transparent;
    border-top: 6px solid #aaa;
    border-bottom: 0;
}

.more {
    position: relative;
}

.more::after {
    content: "";
    position: absolute;
    right: 2px;
    bottom: 3px;
    border-left: 5px solid transparent;
    border-bottom: 5px solid #ddd;
}

.link-btn {
    width: 14px;
    height: 26px;
}

.link-btn::after {
    right: 0;
    bottom: 0;
}

.quote-name {
    width: 322px;
    padding-left: 14px;
    display: flex;
    align-items: center;
    gap: 34px;
    color: #8294a0;
}

.quote-last {
    width: 61px;
    font-size: 18px;
    font-weight: bold;
    line-height: 30px;
    text-align: center;
    color: #aeb6bb;
}

.quote-small {
    width: 53px;
    padding: 2px 0 0 8px;
    font-size: 11px;
    line-height: 12px;
    color: #8294a0;
}

.tool {
    display: flex;
    align-items: center;
    justify-content: center;
    gap: 8px;
    color: #ddd;
}

.w-share {
    width: 86px;
}

.w-icon {
    width: 44px;
}

.w-day {
    width: 51px;
}

.w-style {
    width: 75px;
}

.w-drawings {
    width: 110px;
}

.w-studies {
    width: 97px;
}

.w-patterns {
    width: 108px;
}

.w-list {
    width: 39px;
    border-right: 0;
}

.body {
    display: flex;
}

.workspace {
    flex: 1;
    min-width: 0;
}

/* Study sets */
.sets {
    height: 38px;
    margin-left: 75px;
    padding-bottom: 1px;
    display: flex;
    background-color: #1a1a1a;
    border-top: 1px solid #4a4a4a;
    border-left: 1px solid #4a4a4a;
}

.pin {
    width: 44px;
    display: flex;
    align-items: center;
    justify-content: center;
    border-right: 1px solid #333;
}

.set-list {
    flex: 1;
    display: flex;
    align-items: center;
    gap: 24px;
    padding-left: 12px;
    overflow: hidden;
}

.set-list button {
    display: flex;
    align-items: center;
    gap: 7px;
    white-space: nowrap;
}

.set-list svg {
    color: #aaa;
}

.cell {
    width: 44px;
    display: flex;
    align-items: center;
    justify-content: center;
    border-left: 1px solid #222;
    color: #ddd;
}

.cell-on {
    background-color: #444;
}

.cell-all {
    font-size: 11px;
}

/* Chart rows */
.row {
    display: grid;
    grid-template-columns: 75px 1fr 75px;
}

.row + .row {
    margin-top: 5px;
}

.pane {
    min-width: 0;
    background-color: #1c1c1c;
    border: 1px solid #505050;
}

.status {
    height: 24px;
    display: flex;
    background-color: #0a0a0a;
    border-bottom: 1px solid #505050;
    overflow: hidden;
    white-space: nowrap;
    line-height: 22px;
    color: #868686;
}

.row-price .status {
    height: 25px;
}

.status > * {
    padding: 0 5px 0 4px;
    border-right: 1px solid #505050;
}

.status b {
    font-size: 14px;
    color: #fff;
}

.status i {
    font-style: normal;
    color: #d050d0;
}

.status .rest {
    border-right: 0;
    padding: 0;
}

.status .red {
    color: #cc0000;
}

.status .cyan {
    color: #00c8d2;
}

.status .green {
    color: #00cc00;
}

.status .magenta {
    color: #cc00cc;
}

.status .orchid {
    color: #d050d0;
}

.status .pale {
    color: #ddc9b0;
}

.plot {
    position: relative;
    overflow: hidden;
}

.plot > svg {
    width: 100%;
    height: 100%;
}

.plot-price {
    height: 376px;
}

.plot-iv {
    height: 139px;
}

.plot-ratio {
    height: 137px;
}

.labels {
    position: absolute;
    top: 4px;
    left: 4px;
    display: flex;
    gap: 2px;
}

.label {
    height: 24px;
    padding: 0 1px 0 2px;
    line-height: 22px;
    font-size: 14px;
    font-weight: bold;
    color: #222;
    white-space: nowrap;
    overflow: hidden;
}

.label-wide {
    width: 230px;
}

.label-term {
    width: 182px;
}

.bg-green {
    background-color: #00ff00;
}

.bg-white {
    background-color: #fff;
}

.bg-cyan {
    background-color: #00ffff;
}

.bg-red {
    background-color: #ff0000;
}

.bg-lime {
    background-color: #90ee90;
}

.bg-amber {
    background-color: #ffc800;
}

.missing {
    display: inline-block;
    width: 7px;
    height: 10px;
    margin: 0 1px;
    border: 1px solid #443a10;
}

.alert {
    position: absolute;
    right: 92px;
    width: 102px;
    height: 21px;
    display: flex;
    align-items: center;
    gap: 4px;
    padding-left: 10px;
    background-color: #946800;
    color: #f0e8d4;
    clip-path: polygon(0 0, 93% 0, 100% 50%, 93% 100%, 0 100%);
}

.alert em {
    font-style: normal;
    font-size: 13px;
    color: #d8c8a0;
}

.alert button {
    font-size: 14px;
    color: #fff;
}

.alert-top {
    top: 28px;
}

.alert-low {
    top: 300px;
}

/* Axes */
.axis {
    position: relative;
    display: flex;
    flex-direction: column;
    overflow: hidden;
    line-height: 18px;
    color: #8a8a8a;
    font-size: 13px;
}

.axis-left {
    text-align: right;
    padding-right: 2px;
}

.axis-right {
    padding-left: 3px;
}

.row-price .axis {
    justify-content: space-between;
}

.row-price .axis-left {
    padding-top: 51px;
    padding-bottom: 9px;
}

.row-price .axis-right {
    padding-top: 43px;
    padding-bottom: 21px;
}

.row-iv {
    height: 165px;
}

.row-iv .axis {
    height: 165px;
    padding-top: 21px;
    gap: 48px;
}

.row-ratio .axis {
    padding-top: 63px;
    gap: 38px;
}

.scale-icon {
    position: absolute;
    left: 6px;
    top: 3px;
}

.tag {
    position: absolute;
    left: 3px;
    height: 17px;
    line-height: 17px;
    padding: 0 4px;
    border-radius: 4px;
}

.tag-pink {
    left: auto;
    right: 2px;
    top: 30px;
    background-color: #ff60ff;
    color: #5a205a;
}

.tag-red {
    top: 313px;
    background-color: #ff0000;
    color: #fff;
}

.tag-green {
    top: 363px;
    background-color: #00c832;
    color: #fff;
}

.tag-cyan {
    top: 51px;
    background-color: #00ffff;
    color: #105a5a;
}

.tag-lime {
    top: 90px;
    background-color: #00ff00;
    color: #105a10;
}

.dates {
    height: 16px;
    margin: 0 75px;
    overflow: hidden;
}

.dates svg {
    width: 100%;
    height: 16px;
}

.dates text {
    font-size: 13px;
    text-anchor: middle;
    fill: #8a8a8a;
}

/* Side tabs */
.tabs {
    width: 24px;
    display: flex;
    flex-direction: column;
    background-color: #4a4a4a;
    border-left: 1px solid #555;
}

.tabs button {
    writing-mode: vertical-rl;
    transform: rotate(180deg);
    padding: 9px 0 14px;
    line-height: 19px;
    border-top: 1px solid #5c5c5c;
    color: #c4c4c4;
}

.tabs .tab-on {
    background-color: #6e6e6e;
}

/* Chart drawing */
.plot path {
    fill: none;
}

.seg path {
    vector-effect: non-scaling-stroke;
    stroke-linejoin: round;
}

.expiry {
    stroke: #8c1414;
    stroke-dasharray: 19 7.700;
}

.year {
    stroke: #555;
}

.expiry-text {
    font-size: 13px;
    fill: #7c1818;
}

.expiry-text .year-text {
    fill: #5c5c5c;
}

.spx path {
    stroke: #b04ab8;
    stroke-width: 2;
}

.sma path {
    stroke: #f00000;
    stroke-width: 2.500;
}

.ema path {
    stroke: #00f0f0;
    stroke-width: 2.500;
}

.wick-dn {
    stroke: #ff5a5a;
    stroke-width: 1;
}

.body-dn {
    stroke: #ff5a5a;
    stroke-width: 5;
}

.candle-up {
    stroke: #00a032;
    stroke-width: 1.200;
}

.tick-red {
    stroke: #e00000;
    stroke-width: 3;
}

.tick-green {
    stroke: #00e000;
    stroke-width: 3;
}

.tick-grey {
    stroke: #607080;
    stroke-width: 2;
}

.support {
    stroke: #a83232;
    stroke-width: 2;
}

.trend {
    stroke: #b03434;
    stroke-width: 2;
}

.alert-line {
    stroke: #8c6410;
    stroke-width: 1.500;
}

.level-red {
    stroke: #ff4040;
    stroke-width: 4;
    stroke-dasharray: 27 8.300;
    stroke-dashoffset: 2;
}

.level-white {
    stroke: #fff;
    stroke-width: 3;
    stroke-dasharray: 6.300 9.970;
}

.plot .bubble {
    fill: #ddd;
}

.bubble-text {
    font-size: 13px;
    fill: #333;
}

.price-text {
    font-size: 13px;
    fill: #b03434;
}

.rank path {
    stroke: #00f0f0;
    stroke-width: 2.500;
}

.ratio path {
    stroke: #009aa0;
    stroke-width: 1.500;
}

.pivot-red {
    stroke: #c00000;
    stroke-width: 1.500;
    stroke-dasharray: 26 9;
}

.pivot-green {
    stroke: #00b400;
    stroke-width: 1.500;
    stroke-dasharray: 26 9;
}

.pivot-text-red {
    font-size: 14px;
    fill: #d00000;
}

.pivot-text-green {
    font-size: 14px;
    fill: #00c400;
}

.line-green {
    stroke: #00b400;
    stroke-width: 1.500;
}

.line-red {
    stroke: #c00000;
    stroke-width: 1.500;
}

.line-thick {
    stroke: #a01010;
    stroke-width: 2;
}

.dash-white {
    stroke: #ddd;
    stroke-width: 1.500;
    stroke-dasharray: 7 9.250;
}

.plot .arrow-red path {
    fill: #ff0000;
}

.plot .arrow-green {
    fill: #00ff00;
}

.marker {
    position: absolute;
    top: 0;
    left: 0;
    width: 100%;
    height: 929px;
    pointer-events: none;
}

.marker path {
    fill: none;
    stroke: #26e600;
    stroke-width: 4;
    stroke-linejoin: round;
    stroke-linecap: round;
}
```
